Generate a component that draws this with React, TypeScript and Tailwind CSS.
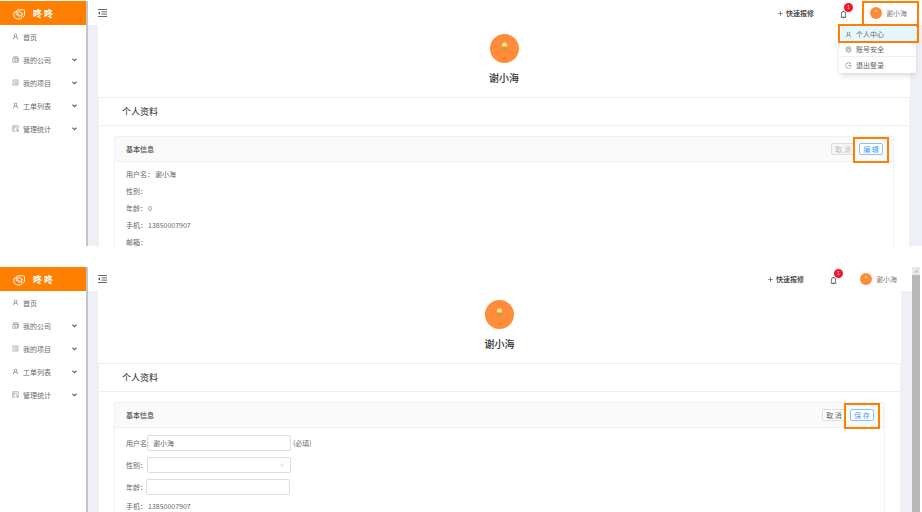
import React from "react";
import clsx from "clsx";
import {
  AiOutlineBell,
  AiOutlineDown,
  AiOutlineLogout,
  AiOutlinePlus,
  AiOutlineProfile,
  AiOutlineSetting,
  AiOutlineUser,
} from "react-icons/ai";

const CompanyIcon = () => (
  <svg viewBox="0 0 14 14" className="size-[7px]" fill="none" stroke="currentColor">
    <path d="M3.5 5V1.5h8V5M1.5 5h10v7.5h-10zM4 8h5M4 10.3h5M6.5 3.2h2M12.7 4v8.5" />
  </svg>
);

const StatsIcon = () => (
  <svg viewBox="0 0 14 14" className="size-[7px]" fill="none" stroke="currentColor">
    <path d="M12.5 7V1.5h-11v11H7M4 4.5h3M4 4.500v5M7.500 4l5 5.500M8 8.500l4.500 4M12.500 9v3.500H9" />
  </svg>
);

const FoldIcon = () => (
  <svg viewBox="0 0 18 16" className="h-2 w-[9px]" fill="none" stroke="currentColor" strokeWidth="1.6">
    <path d="M0 1h18M7 5.700h11M7 10.300h11M0 15h18" />
    <path d="M0 8l4-3v6z" fill="currentColor" stroke="none" />
  </svg>
);

const Logo = () => (
  <svg
    viewBox="0 0 24 22"
    className="h-[11px] w-3"
    fill="none"
    stroke="white"
    strokeWidth="1.8"
    strokeLinejoin="round"
    strokeLinecap="round"
  >
    <path d="M7.500 5V3.500Q7.500 1.500 9.500 1.500h11q2.500 0 2.500 2.500v8.500q0 2.500-3 3.500" />
    <path d="M3.500 6H7.500M17.500 8.500V17q0 3-3 3H9Q1.500 18.500 1.500 12.500V8.500Q1.500 6 3.500 6" />
    <path d="M6 10l7 5.500M8 6.500q5-3 8 0l3.500 3.500M6 10l3.500-.5 6 4" />
  </svg>
);

const menu = [
  { label: "首页", icon: <AiOutlineUser size={7} />, open: false },
  { label: "我的公司", icon: <CompanyIcon />, open: true },
  { label: "我的项目", icon: <AiOutlineProfile size={7} />, open: true },
  { label: "工单列表", icon: <AiOutlineUser size={7} />, open: true },
  { label: "管理统计", icon: <StatsIcon />, open: true },
];

const Sidebar = () => (
  <aside className="w-[88px] shrink-0 border-r-2 border-[#c1c4ca] bg-white">
    <div className="flex h-6 items-center gap-2 bg-[#ff8000] pt-0.5 pl-[13px] text-[9px] font-bold text-white">
      <Logo />
      <span>咚 咚</span>
    </div>
    <nav>
      {menu.map((item) => (
        <a
          key={item.label}
          href="#"
          className="flex h-[23px] items-center pr-[9px] pl-3 text-[#6b6b6b]"
        >
          {item.icon}
          <span className="ml-1 flex-1">{item.label}</span>
          {item.open && (
            <svg viewBox="0 0 10 8" className="h-1 w-[5px]" fill="none" stroke="#666" strokeWidth="2.4">
              <path d="M1 1.500l4 4 4-4" />
            </svg>
          )}
        </a>
      ))}
    </nav>
  </aside>
);

const Avatar = ({ large = false }: { large?: boolean }) => (
  <svg viewBox="0 0 29 29" className={large ? "size-[29px]" : "size-3"}>
    <circle cx="14.5" cy="14.5" r="14.5" fill="#ff8c3a" />
    <ellipse cx="14.5" cy="11.500" rx="2.600" ry="3" fill="#f7e48a" />
    <path d="M12 12.500h5l-.8 4.500h-3.200z" fill="#c2a12f" />
    <path d="M13 24.200h3.500" stroke="#dc6f2a" strokeWidth="1" />
  </svg>
);

const UserMenu = () => (
  <div className="absolute top-[18px] -right-[9px] z-10 w-[77px] rounded-xs bg-white pt-px text-[#666] shadow-md">
    <button className="relative flex h-4 w-full items-center gap-1 bg-[#e6f7ff] pl-1.5">
      <AiOutlineUser size={7} />
      个人中心
      <span className="absolute -top-0.5 -right-[3px] -bottom-px -left-px border-2 border-[#ff8000]" />
    </button>
    <button className="flex h-[15px] w-full items-center gap-1 border-b border-[#f0f0f0] pl-1.5">
      <AiOutlineSetting size={7} />
      账号安全
    </button>
    <button className="flex h-4 w-full items-center gap-1 pl-1.5">
      <AiOutlineLogout size={7} />
      退出登录
    </button>
  </div>
);

const Header = ({ menuOpen }: { menuOpen: boolean }) => (
  <header className="flex h-6 items-center bg-white pr-[15px] pl-[10px]">
    <button aria-label="收起菜单" className="text-[#444]">
      <FoldIcon />
    </button>
    <button className="ml-auto flex items-center gap-0.5 font-medium text-[#333]">
      <AiOutlinePlus size={7} />
      快速报修
    </button>
    <button aria-label="通知" className="relative ml-[25px] pt-0.5 text-[#444]">
      <AiOutlineBell size={9} />
      <span className="absolute -top-[5px] -right-[5px] flex size-[9px] items-center justify-center rounded-full bg-[#f5142a] text-[5px] text-white">
        1
      </span>
    </button>
    <div className="relative ml-[22px]">
      <button className="flex items-center gap-1 text-[#7d7d7d]">
        <Avatar />
        谢小海
      </button>
      {menuOpen && (
        <>
          <span className="absolute -top-1.5 -right-3 -bottom-2 -left-2 border-2 border-[#ff8000]" />
          <UserMenu />
        </>
      )}
    </div>
  </header>
);

const Field = ({ label, value }: { label: string; value?: string }) => (
  <div className="flex gap-px">
    <dt>{label}：</dt>
    <dd>{value}</dd>
  </div>
);

const ProfileView = () => (
  <dl className="flex flex-col gap-[9px] px-[11px] pt-2 leading-2">
    <Field label="用户名" value="谢小海" />
    <Field label="性别" />
    <Field label="年龄" value="0" />
    <Field label="手机" value="13850007907" />
    <Field label="邮箱" />
  </dl>
);

const control = "h-4 w-36 rounded-xs border border-[#dedede] bg-transparent px-[5px]";

const ProfileForm = () => (
  <form className="flex flex-col gap-1.5 px-[11px] pt-[7px] pb-px leading-[10px]">
    <div className="flex items-center">
      <label htmlFor="name" className="w-[21px] whitespace-nowrap">用户名:</label>
      <input id="name" defaultValue="谢小海" className={control} />
      <span className="ml-0.5">(必填)</span>
    </div>
    <div className="flex items-center">
      <label htmlFor="gender" className="w-[21px] whitespace-nowrap">性别：</label>
      <div className="relative">
        <select id="gender" className={clsx(control, "block appearance-none")}>
          <option></option>
        </select>
        <AiOutlineDown size={6} className="absolute top-[5px] right-[6px] text-[#bfbfbf]" />
      </div>
    </div>
    <div className="flex items-center">
      <label htmlFor="age" className="w-5 whitespace-nowrap">年龄：</label>
      <input id="age" className={control} />
    </div>
    <dl>
      <Field label="手机" value="13850007907" />
    </dl>
  </form>
);

const Screen = ({ editing = false }: { editing?: boolean }) => (
  <section className="flex">
    <Sidebar />
    <div className="flex min-w-0 flex-1 flex-col bg-[#eff0f5]">
      <Header menuOpen={!editing} />
      <main
        className={clsx("ml-[10px] flex flex-1 flex-col bg-white", editing ? "mr-[11px]" : "mr-3")}
      >
        <div className="flex flex-col items-center pt-[9px] pb-3">
          <Avatar large />
          <h1 className="mt-2 text-[10px] leading-[14px] font-medium text-[#333]">谢小海</h1>
        </div>
        <div className="flex flex-1 flex-col border-x border-t border-[#f0f0f2]">
          <h2 className="h-7 border-b border-[#f0f0f2] pl-[23px] text-[9px] leading-7 text-[#262626]">
            个人资料
          </h2>
          <div className="mx-[15px] mt-[10px] flex-1 rounded-t-xs border-x border-t border-[#f0f0f2]">
            <div className="flex h-[25px] items-center border-b border-[#f0f0f2] bg-[#fafafa] pr-[10px] pb-px pl-[11px]">
              <h3 className="flex-1 font-medium text-[#4a4a4a]">基本信息</h3>
              <button
                disabled={!editing}
                className={clsx(
                  "h-3 w-6 rounded-xs border border-[#dedede] leading-[10px]",
                  editing ? "bg-white text-[#595959]" : "bg-[#f5f5f5] text-[#bfbfbf]",
                )}
              >
                取 消
              </button>
              <button className="relative ml-1 h-3 w-6 rounded-xs border border-[#84c5ff] bg-white leading-[10px] text-[#3b9bff]">
                {editing ? "保 存" : "编 辑"}
                <span className="absolute -inset-x-[7px] -top-[7px] -bottom-[9px] border-2 border-[#ff8000]" />
              </button>
            </div>
            {editing ? <ProfileForm /> : <ProfileView />}
          </div>
        </div>
      </main>
    </div>
    {editing && (
      <div className="mr-0.5 flex w-2 flex-col bg-[#b8b8b8]">
        <div className="flex h-2 items-center justify-center bg-[#e9e9e9] text-[#777]">
          <AiOutlineDown size={5} className="rotate-180" />
        </div>
      </div>
    )}
  </section>
);

const App = () => (
  <div className="flex flex-col gap-[21px] bg-white pt-px font-['Noto_Sans_CJK_SC',sans-serif] text-[7px] leading-[10px] text-[#666]">
    <Screen />
    <Screen editing />
  </div>
);

export default App;
